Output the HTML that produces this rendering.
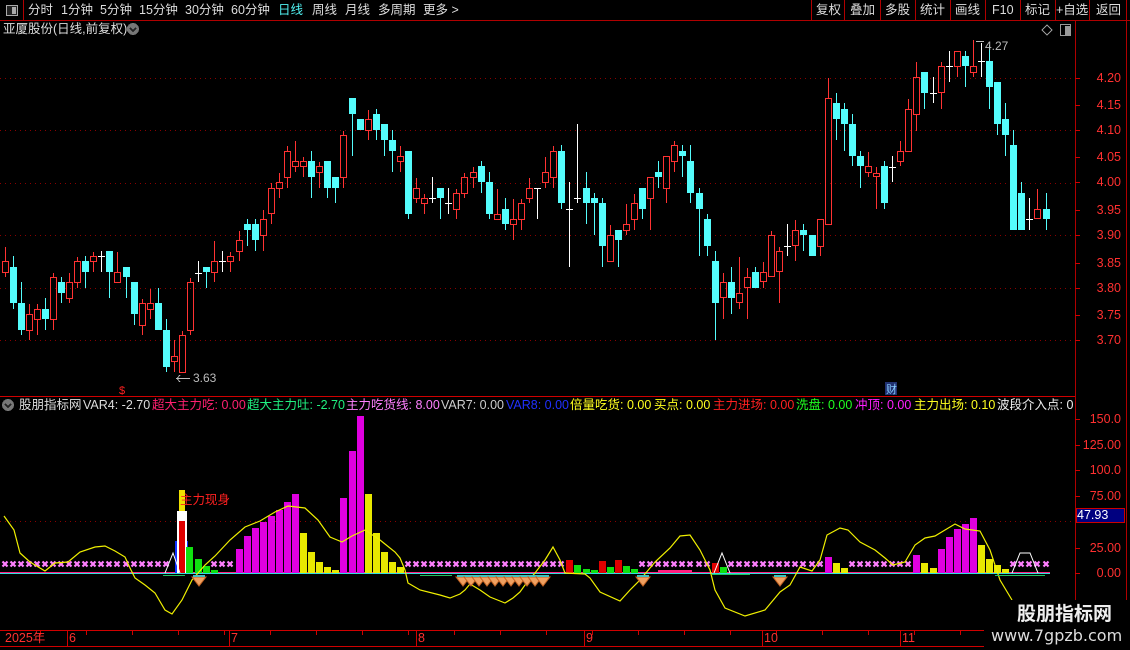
<!DOCTYPE html>
<html><head><meta charset="utf-8">
<style>
html,body{margin:0;padding:0;background:#000;width:1130px;height:650px;overflow:hidden;font-family:"Liberation Sans","Noto Sans CJK SC",sans-serif;}
#c{position:absolute;left:0;top:0}
.t{position:absolute;white-space:nowrap;font-size:12.5px;line-height:14px}
</style></head><body>
<svg id="c" width="1130" height="650" xmlns="http://www.w3.org/2000/svg" shape-rendering="crispEdges">
<g id="g"></g>
</svg>
<!-- top menu -->
<div class="t" style="left:28px;top:3px;color:#ddd">分时</div>
<div class="t" style="left:61px;top:3px;color:#ddd">1分钟</div>
<div class="t" style="left:100px;top:3px;color:#ddd">5分钟</div>
<div class="t" style="left:139px;top:3px;color:#ddd">15分钟</div>
<div class="t" style="left:185px;top:3px;color:#ddd">30分钟</div>
<div class="t" style="left:231px;top:3px;color:#ddd">60分钟</div>
<div class="t" style="left:278px;top:3px;color:#50f0f0">日线</div>
<div class="t" style="left:312px;top:3px;color:#ddd">周线</div>
<div class="t" style="left:345px;top:3px;color:#ddd">月线</div>
<div class="t" style="left:378px;top:3px;color:#ddd">多周期</div>
<div class="t" style="left:423px;top:3px;color:#ddd">更多 &gt;</div>
<div class="t" style="left:816px;top:3px;color:#ddd">复权</div>
<div class="t" style="left:850px;top:3px;color:#ddd">叠加</div>
<div class="t" style="left:885px;top:3px;color:#ddd">多股</div>
<div class="t" style="left:920px;top:3px;color:#ddd">统计</div>
<div class="t" style="left:955px;top:3px;color:#ddd">画线</div>
<div class="t" style="left:992px;top:3px;color:#ddd">F10</div>
<div class="t" style="left:1025px;top:3px;color:#ddd">标记</div>
<div class="t" style="left:1056px;top:3px;color:#ddd">+自选</div>
<div class="t" style="left:1096px;top:3px;color:#ddd">返回</div>
<div class="t" style="left:3px;top:22px;color:#ddd">亚厦股份(日线,前复权)</div>
<div class="t" style="left:985px;top:39px;color:#bbb;font-size:12px">4.27</div>
<div class="t" style="left:193px;top:371px;color:#bbb;font-size:12px">3.63</div>
<!-- legend -->
<div class="t" style="left:19px;top:398px;color:#ddd">股朋指标网</div>
<div class="t" style="left:83px;top:398px;color:#ddd">VAR4: -2.70</div>
<div class="t" style="left:152px;top:398px;color:#ff2070">超大主力吃: 0.00</div>
<div class="t" style="left:247px;top:398px;color:#20f080">超大主力吐: -2.70</div>
<div class="t" style="left:346px;top:398px;color:#ff80ff">主力吃货线: 8.00</div>
<div class="t" style="left:441px;top:398px;color:#ccc">VAR7: 0.00</div>
<div class="t" style="left:506px;top:398px;color:#2030ff">VAR8: 0.00</div>
<div class="t" style="left:570px;top:398px;color:#ffff20">倍量吃货: 0.00</div>
<div class="t" style="left:654px;top:398px;color:#ffff20">买点: 0.00</div>
<div class="t" style="left:713px;top:398px;color:#ff2020">主力进场: 0.00</div>
<div class="t" style="left:796px;top:398px;color:#20ff20">洗盘: 0.00</div>
<div class="t" style="left:855px;top:398px;color:#ff20ff">冲顶: 0.00</div>
<div class="t" style="left:914px;top:398px;color:#ffff20">主力出场: 0.10</div>
<div style="position:absolute;left:997px;top:398px;width:77px;overflow:hidden;"><div class="t" style="position:static;color:#eee">波段介入点: 0.00</div></div>
<div class="t" style="left:180px;top:493px;color:#ff2020">主力现身</div>
<!-- axis labels -->
<div id="ax"></div>
<div style="position:absolute;left:1076px;top:508px;width:49px;height:15px;background:#000080;border:1px solid #c00;box-sizing:border-box"></div>
<div class="t" style="left:1077px;top:508px;color:#fff;font-size:12.5px">47.93</div>
<!-- date axis -->
<div class="t" style="left:5px;top:631px;color:#ff3030">2025年</div>
<div class="t" style="left:69px;top:631px;color:#ff3030">6</div>
<div class="t" style="left:231px;top:631px;color:#ff3030">7</div>
<div class="t" style="left:418px;top:631px;color:#ff3030">8</div>
<div class="t" style="left:586px;top:631px;color:#ff3030">9</div>
<div class="t" style="left:764px;top:631px;color:#ff3030">10</div>
<div class="t" style="left:902px;top:631px;color:#ff3030">11</div>
<!-- watermark -->
<div style="position:absolute;left:984px;top:600px;width:146px;height:50px;background:#000"></div>
<div class="t" style="left:1017px;top:604px;color:#eee;font-size:19px;line-height:22px;font-weight:bold">股朋指标网</div>
<div class="t" style="left:991px;top:627px;color:#ddd;font-size:16px;line-height:18px;font-family:'DejaVu Sans',sans-serif">www.7gpzb.com</div>
<script>
var NS="http://www.w3.org/2000/svg",g=document.getElementById('g');
function el(n,a){var e=document.createElementNS(NS,n);for(var k in a)e.setAttribute(k,a[k]);g.appendChild(e);return e;}
function L(x1,y1,x2,y2,c,w,d){var a={x1:x1,y1:y1,x2:x2,y2:y2,stroke:c,'stroke-width':w||1};if(d)a['stroke-dasharray']=d;el('line',a);}
function R(x,y,w,h,f){el('rect',{x:x,y:y,width:w,height:h,fill:f});}
var RED='#b00000';
// frame lines
L(0,20.5,1130,20.5,RED);L(23.5,0,23.5,20,RED);
[811,844,880,915,950,985,1020,1055,1089,1126].forEach(function(x){L(x+.5,0,x+.5,20,RED);});
R(6,5,12,11,'#222');el('rect',{x:6.5,y:5.5,width:11,height:10,fill:'none',stroke:'#aaa'});R(12,7,4,7,'#aaa');
L(1075.5,20,1075.5,646,RED);L(1126.5,20,1126.5,646,RED);
L(0,396.5,1075,396.5,'#d00000');
L(0,630.5,1130,630.5,'#d00000');L(0,646.5,1130,646.5,'#d00000');
[67,229,416,584,762,900].forEach(function(x){L(x+.5,631,x+.5,646,'#d00000');});
for(var x=40;x<1075;x+=46)L(x+.5,631,x+.5,635,'#d00000');
// icons
el('circle',{cx:133,cy:29,r:6,fill:'#777'});el('path',{d:'M130 28 L133 31 L136 28',stroke:'#222','stroke-width':1.5,fill:'none'});
el('circle',{cx:8,cy:405,r:6,fill:'#777'});el('path',{d:'M5 404 L8 407 L11 404',stroke:'#222','stroke-width':1.5,fill:'none'});
el('path',{d:'M1047 25 L1052 30 L1047 35 L1042 30 Z',fill:'none',stroke:'#999'});
el('rect',{x:1060.5,y:24.5,width:10,height:11,fill:'none',stroke:'#999'});R(1065,26,5,9,'#999');
// grid
[4.2,4.1,4.0,3.9,3.8,3.7].forEach(function(p){var y=Math.round(77.5+(4.2-p)*525)+.5;L(0,y,1075,y,'#8a0000',1,'1 4');});
L(0,521.5,1075,521.5,'#8a0000',1,'1 4');
// axis labels
var ax=document.getElementById('ax'),h='';
[['4.20',78],['4.15',105],['4.10',130],['4.05',157],['4.00',182],['3.95',210],['3.90',235],['3.85',263],['3.80',288],['3.75',315],['3.70',340],
 ['150.0',419],['125.00',445],['100.0',470],['75.00',496],['25.00',548],['0.00',573]].forEach(function(a){
 h+='<div class="t" style="left:1078px;width:43px;text-align:right;top:'+(a[1]-7)+'px;color:#ff3030">'+a[0]+'</div>';
 L(1075,a[1]+.5,1080,a[1]+.5,'#d00000');});
ax.innerHTML=h;
// candles: [bodyTop, bodyBot, wickTop, wickBot, type]
var C=[[261,273,247,277,'r'],[267,303,256,309,'c'],[303,330,282,335,'c'],[314,331,304,340,'r'],[309,320,304,335,'r'],[309,319,298,330,'c'],[277,320,273,330,'r'],[282,293,277,303,'c'],[282,299,273,303,'r'],[261,283,257,288,'r'],
[261,272,256,288,'c'],[256,262,252,272,'r'],[256,256,251,272,'w'],[251,272,251,298,'c'],[272,283,252,283,'r'],[267,277,267,298,'c'],[282,314,282,325,'c'],[303,326,299,335,'r'],[303,310,289,319,'r'],[303,330,288,330,'c'],
[330,367,319,372,'c'],[356,362,340,372,'r'],[335,373,331,373,'r'],[282,331,278,335,'r'],[273,273,261,282,'w'],[267,272,267,288,'c'],[261,273,241,282,'r'],[261,261,251,272,'w'],[256,262,252,272,'r'],[240,252,231,261,'r'],
[224,230,219,246,'c'],[224,240,219,251,'c'],[219,236,210,251,'r'],[188,214,183,224,'r'],[182,189,173,198,'r'],[151,178,146,188,'r'],[161,167,141,172,'r'],[161,167,157,177,'r'],[161,177,151,198,'c'],[166,173,162,188,'r'],
[161,188,161,198,'c'],[177,188,177,203,'c'],[135,178,131,188,'r'],[98,114,98,156,'c'],[119,130,119,130,'c'],[119,131,110,140,'r'],[114,130,109,140,'c'],[124,140,124,156,'c'],[140,151,130,172,'c'],[156,162,146,172,'r'],
[151,214,151,219,'c'],[188,199,178,203,'r'],[198,204,194,214,'r'],[198,198,177,203,'w'],[188,198,188,219,'c'],[203,203,188,214,'w'],[193,210,189,219,'r'],[177,194,173,198,'r'],[172,178,167,188,'r'],[166,182,161,193,'c'],
[182,214,172,219,'c'],[214,220,189,220,'r'],[209,224,198,230,'c'],[219,225,199,240,'r'],[203,220,199,230,'r'],[188,199,178,203,'r'],[188,188,188,219,'w'],[172,183,157,188,'r'],[151,178,146,188,'r'],[151,203,145,209,'c'],
[209,209,182,267,'w'],[198,198,124,203,'w'],[188,203,172,224,'c'],[198,203,193,235,'c'],[203,246,198,267,'c'],[235,262,225,262,'r'],[230,240,230,267,'c'],[224,231,204,235,'r'],[203,220,194,230,'r'],[188,209,188,219,'c'],
[177,199,177,230,'r'],[172,177,161,188,'c'],[156,189,156,203,'r'],[145,162,141,172,'r'],[151,156,145,177,'c'],[161,193,145,203,'c'],[193,209,188,256,'c'],[219,246,214,256,'c'],[261,303,251,340,'c'],[282,298,273,319,'r'],
[282,298,267,314,'c'],[293,303,257,309,'r'],[277,288,268,319,'r'],[272,288,267,288,'c'],[272,282,262,288,'r'],[235,277,231,277,'r'],[251,272,247,303,'r'],[246,246,224,256,'w'],[230,246,220,261,'r'],[230,235,224,251,'c'],
[235,256,235,256,'c'],[219,247,219,256,'r'],[98,225,78,225,'r'],[103,119,93,140,'c'],[109,124,103,151,'c'],[124,156,114,166,'c'],[156,166,151,188,'c'],[166,173,152,177,'r'],[173,177,167,209,'r'],[166,203,161,209,'c'],
[167,167,156,182,'w'],[151,162,141,166,'r'],[109,152,99,152,'r'],[77,115,62,131,'r'],[72,93,72,109,'c'],[93,93,77,103,'w'],[66,93,62,109,'r'],[66,66,51,82,'w'],[51,67,51,77,'r'],[56,66,51,87,'c'],
[66,73,40,77,'r'],[61,61,43,77,'w'],[61,87,45,109,'c'],[82,124,82,135,'c'],[119,135,103,156,'c'],[145,230,130,230,'c'],[193,230,182,230,'c'],[219,219,198,230,'w'],[209,219,189,219,'r'],[209,219,193,230,'c']];
function cx(i){return Math.round(4.5+i*8.07);}
C.forEach(function(c,i){var x=cx(i),t=c[4];
 if(t=='c'){L(x+.5,c[2],x+.5,c[3],'#54fcfc');R(x-3,c[0],7,Math.max(c[1]-c[0],2),'#54fcfc');}
 else if(t=='r'){L(x+.5,c[2],x+.5,c[0],'#ff3232');L(x+.5,c[1],x+.5,c[3],'#ff3232');el('rect',{x:x-2.5,y:c[0]+.5,width:6,height:Math.max(c[1]-c[0]-1,1),fill:'none',stroke:'#ff3232'});}
 else {L(x+.5,c[2],x+.5,c[3],'#fff');L(x-3,c[0]+.5,x+4,c[0]+.5,'#fff');}
});
// high/low markers
L(176,378.5,190,378.5,'#bbb');el('path',{d:'M180 375 L177 378.5 L180 382',stroke:'#bbb',fill:'none'});
L(976,41.5,984,41.5,'#bbb');
el('text',{x:119,y:394,fill:'#ff2020','font-size':11,'font-family':'Liberation Sans'}).textContent='$';
R(885,382,12,13,'#203070');el('text',{x:886,y:393,fill:'#8cf','font-size':11,'font-family':'Noto Sans CJK SC'}).textContent='财';
// indicator baseline
L(0,572.5,1050,572.5,'#ff2080',1);L(0,573.5,1050,573.5,'#30e0e0',1);
// pink markers
var bars={};
function bar(i,top,col){var x=cx(i);R(x-3,top,7,573-top,col);bars[i]=1;}
var mg='#e000e0',yl='#e8e800';
[549,536,528,522,516,510,502,494].forEach(function(t,k){bar(29+k,t,mg);});
[533,552,562,567,570].forEach(function(t,k){bar(37+k,t,yl);});
bar(42,498,mg);bar(43,451,mg);bar(44,416,mg);
[494,533,552,562,567].forEach(function(t,k){bar(45+k,t,yl);});
bar(102,557,mg);bar(103,563,yl);bar(104,568,yl);
bar(113,555,mg);bar(114,563,yl);bar(115,568,yl);
[549,537,529,524,518].forEach(function(t,k){bar(116+k,t,mg);});
[545,559,565,569].forEach(function(t,k){bar(121+k,t,yl);});
var gr='#10e010';
[[70,560,'#e00000'],[71,565,gr],[72,569,gr],[73,570,gr],[74,561,'#e00000'],[75,567,gr],[76,560,'#e00000'],[77,566,gr],[78,569,gr],[88,563,'#e00000'],[89,567,gr]].forEach(function(b){bar(b[0],b[1],b[2]);});
// special 主力现身 bar
R(175,541,13,32,'#1030ff');R(177,511,10,62,'#fff');R(179,521,6,52,'#e00000');R(179,490,6,21,'#f0e000');
[[186,547],[195,559],[203,566],[211,570]].forEach(function(b){R(b[0],b[1],7,573-b[1],gr);});
[21,22,23,24,25].forEach(function(i){bars[i]=1;});
for(var i=0;i<130;i++){if(bars[i])continue;var x=cx(i);
 el('path',{d:'M'+(x-2.5)+' '+561.5+' l5 5 M'+(x+2.5)+' '+561.5+' l-5 5',stroke:'#ff80ff','stroke-width':2.2,'shape-rendering':'auto'});}
// yellow line
var Y=[[4,516],[14,530],[20,553],[30,562],[45,571],[55,563],[68,562],[80,552],[95,547],[105,546],[115,551],[125,557],[130,568],[135,578],[145,585],[155,593],[165,610],[172,614],[182,600],[192,580],[205,565],[215,556],[230,540],[245,527],[260,521],[275,512],[288,506],[305,508],[318,520],[330,537],[342,542],[352,536],[365,530],[380,540],[395,552],[400,558],[405,570],[408,583],[420,590],[440,595],[450,598],[460,594],[465,590],[470,584],[480,590],[490,597],[500,601],[505,603],[513,598],[520,592],[525,585],[535,573],[545,560],[553,547],[560,560],[565,573],[585,574],[590,578],[600,592],[620,601],[630,590],[640,580],[655,562],[670,548],[680,536],[690,535],[700,550],[710,570],[715,590],[725,608],[745,616],[765,610],[780,592],[790,585],[800,567],[812,571],[820,560],[827,535],[840,528],[848,530],[860,542],[875,550],[885,558],[893,565],[905,562],[915,545],[925,538],[935,536],[945,530],[955,524],[965,529],[980,531],[990,550],[1000,580],[1012,600]];
el('polyline',{points:Y.map(function(p){return p.join(',');}).join(' '),fill:'none',stroke:'#f0f000','stroke-width':1.2,'shape-rendering':'auto'});
// white lines
el('polyline',{points:'165,573 173,553 180,573',fill:'none',stroke:'#fff','shape-rendering':'auto'});
el('polyline',{points:'714,573 722,553 730,573',fill:'none',stroke:'#fff','shape-rendering':'auto'});
el('polyline',{points:'1012,573 1020,553 1030,553 1038,573',fill:'none',stroke:'#fff','shape-rendering':'auto'});
// green lines
L(163,575.5,185,575.5,'#20c060');L(420,575.5,452,575.5,'#20c060');L(712,574.5,750,574.5,'#20c060');L(995,575.5,1045,575.5,'#20c060');
R(658,570,34,3,'#ff2080');
// diamonds
function dia(x){el('path',{d:'M'+(x-7)+' 577 L'+(x+7)+' 577 L'+x+' 586 Z',fill:'#f0a060',stroke:'#c06020','shape-rendering':'auto'});R(x-6,575,12,2,'#40c0c0');}
[199,463,471,479,487,495,503,511,519,527,535,543,643,780].forEach(dia);
</script>
</body></html>
